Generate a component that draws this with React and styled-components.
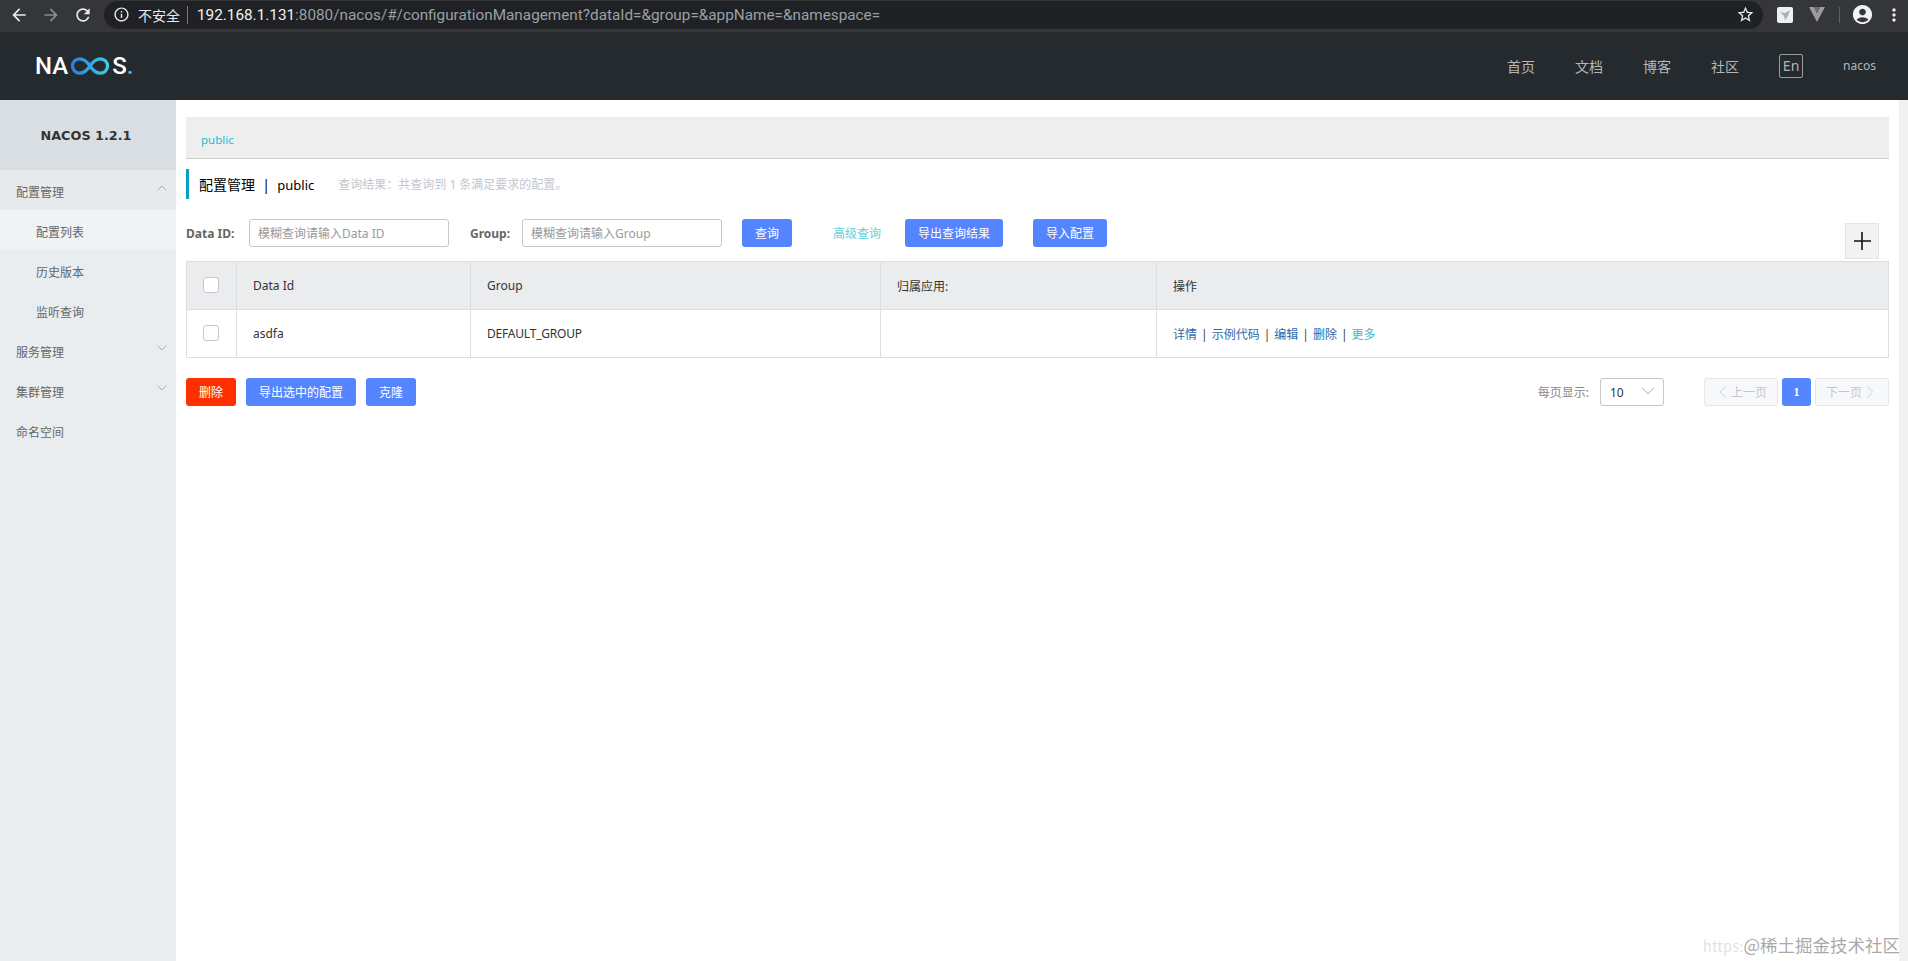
import React from "react";
import styled, { createGlobalStyle } from "styled-components";
import {
  MdArrowBack,
  MdArrowForward,
  MdRefresh,
  MdInfoOutline,
  MdStarBorder,
  MdAccountCircle,
  MdMoreVert,
} from "react-icons/md";
import { ChevronUp, ChevronDown, ChevronLeft, ChevronRight } from "lucide-react";

const FONT = `"Noto Sans", "Noto Sans CJK SC", sans-serif`;

const GlobalStyle = createGlobalStyle`
  html, body {
    margin: 0;
    padding: 0;
    height: 100%;
    overflow: hidden;
    background: #fff;
    font-family: ${FONT};
    font-size: 12px;
    color: #333;
  }
  * { box-sizing: border-box; }
`;

const Page = styled.div`
  position: relative;
  width: 1908px;
  height: 961px;
  display: flex;
  flex-direction: column;
  overflow: hidden;
`;

/* browser chrome */
const BrowserBar = styled.div`
  height: 33px;
  flex: none;
  background: #35363a;
  border-bottom: 1px solid #2a2b2e;
  display: flex;
  align-items: center;
  padding: 0 4px 3px 3px;
`;

const ChromeBtn = styled.span`
  width: 32px;
  height: 24px;
  flex: none;
  display: flex;
  align-items: center;
  justify-content: center;
  font-size: 20px;
  color: ${(p) => (p.$dim ? "#8b8c8e" : "#e8eaed")};
`;

const UrlPill = styled.div`
  margin-left: 5px;
  width: 1659px;
  height: 28px;
  flex: none;
  border-radius: 14px;
  background: #202124;
  display: flex;
  align-items: center;
  padding: 0 8px 0 9px;
  color: #e8eaed;
  font-family: "Roboto", "Noto Sans CJK SC", sans-serif;
  font-size: 14px;
`;

const InfoIcon = styled(MdInfoOutline)`
  font-size: 17px;
  margin-right: 8px;
`;

const Insecure = styled.span`
  font-size: 14px;
  white-space: nowrap;
`;

const UrlDivider = styled.i`
  width: 1px;
  height: 18px;
  background: #75777a;
  margin: 0 9px 0 7px;
`;

const Url = styled.span`
  flex: 1;
  font-size: 15.3px;
  color: #9aa0a6;
  white-space: nowrap;
`;

const UrlHost = styled.span`
  color: #f1f3f4;
`;

const StarIcon = styled(MdStarBorder)`
  font-size: 19px;
`;

const ExtGroup = styled.div`
  flex: 1;
  display: flex;
  align-items: center;
  padding-left: 14px;
`;

const ExtTile = styled.svg`
  width: 16px;
  height: 16px;
  flex: none;
`;

const ExtV = styled.svg`
  width: 16px;
  height: 15px;
  margin-left: 16px;
  flex: none;
`;

const ExtDivider = styled.i`
  width: 1px;
  height: 16px;
  background: #5f6063;
  margin: 0 11px 0 14px;
`;

const Avatar = styled(MdAccountCircle)`
  font-size: 23px;
  color: #f1f3f4;
  flex: none;
`;

const MoreIcon = styled(MdMoreVert)`
  font-size: 20px;
  color: #e8eaed;
  margin-left: 10px;
  flex: none;
`;

/* site header */
const Header = styled.header`
  height: 67px;
  flex: none;
  background: #252a2f;
  display: flex;
  align-items: center;
  justify-content: space-between;
  padding: 0 32px 2px 35px;
`;

const Logo = styled.div`
  display: flex;
  align-items: center;
  color: #fff;
  font-family: "Roboto", "Liberation Sans", sans-serif;
  font-weight: 500;
  font-size: 24px;
  line-height: 1;
`;

const LogoMark = styled.svg`
  width: 42px;
  height: 18px;
  margin: 0 1px;
`;

const LogoDot = styled.span`
  color: #37c8e0;
`;

const HeaderNav = styled.nav`
  display: flex;
  align-items: center;
  gap: 40px;
  color: #b4b6b8;
  font-size: 14px;
`;

const LangBox = styled.span`
  width: 24px;
  height: 24px;
  border: 1px solid #9a9c9e;
  border-radius: 2px;
  display: flex;
  align-items: center;
  justify-content: center;
  color: #b4b6b8;
`;

const UserName = styled.span`
  font-size: 12px;
`;

/* body */
const Body = styled.div`
  flex: 1;
  display: flex;
  min-height: 0;
`;

const Sidebar = styled.aside`
  width: 176px;
  flex: none;
  background: #e9edf0;
`;

const SideTitle = styled.div`
  height: 70px;
  background: #d9dee2;
  display: flex;
  align-items: center;
  justify-content: center;
  padding-right: 4px;
  font-family: "DejaVu Sans", sans-serif;
  font-weight: 700;
  font-size: 12.800px;
  color: #333;
`;

const SideItem = styled.div`
  height: 40px;
  display: flex;
  align-items: center;
  justify-content: space-between;
  padding: 3px 6px 0 ${(p) => (p.$sub ? "36px" : "16px")};
  color: #666;
  font-size: 12px;
  background: ${(p) => (p.$active ? "#f0f3f5" : p.$open ? "#e6eaed" : "transparent")};
  svg {
    color: #888;
    margin-top: -7px;
  }
`;

const Main = styled.main`
  flex: 1;
  min-width: 0;
  position: relative;
  padding: 17px 10px 0 10px;
`;

const ScrollTrack = styled.div`
  width: 9px;
  flex: none;
  background: #f1f1f1;
`;

const Crumb = styled.div`
  height: 42px;
  background: #eeeeee;
  border-bottom: 1px solid #ccc;
  padding: 4px 0 0 15px;
  display: flex;
  align-items: center;
  color: #25bcd0;
  font-size: 11.500px;
`;

const TitleRow = styled.div`
  height: 30px;
  margin-top: 10px;
  display: flex;
  align-items: center;
  border-left: 3px solid #09a0c4;
  padding-left: 10px;
`;

const TitleText = styled.span`
  font-size: 14px;
  color: #000;
  white-space: pre;
`;

const TitleLatin = styled.span`
  font-size: 13px;
`;

const TitleNote = styled.span`
  margin-left: 24px;
  font-size: 12px;
  color: #c4c6cf;
`;

const SearchRow = styled.div`
  height: 28px;
  margin-top: 20px;
  display: flex;
  align-items: center;
`;

const FieldLabel = styled.label`
  font-weight: 700;
  font-size: 12px;
  color: #666;
  width: ${(p) => p.$w}px;
  flex: none;
`;

const Input = styled.input`
  width: 200px;
  height: 28px;
  flex: none;
  border: 1px solid #c4c6cf;
  border-radius: 3px;
  padding: 0 8px;
  margin-right: ${(p) => p.$gap || 0}px;
  font-family: ${FONT};
  font-size: 12px;
  outline: none;
  &::placeholder {
    color: #999;
    opacity: 1;
  }
`;

const Button = styled.button`
  height: 28px;
  flex: none;
  width: ${(p) => p.$w}px;
  margin-left: ${(p) => p.$ml || 0}px;
  border: 0;
  border-radius: 3px;
  padding: 0;
  background: ${(p) => (p.$danger ? "#ff3000" : "#5584ff")};
  color: #fff;
  font-family: ${FONT};
  font-size: 12px;
`;

const AdvancedLink = styled.a`
  margin-left: 41px;
  width: 72px;
  flex: none;
  color: #5fcfdc;
  font-size: 12px;
`;

const PlusButton = styled.div`
  position: absolute;
  left: 1669px;
  top: 123px;
  width: 34px;
  height: 36px;
  background: #f2f2f2;
  border: 1px solid #e4e4e4;
  display: flex;
  align-items: center;
  justify-content: center;
  svg {
    display: block;
  }
`;

const Table = styled.table`
  width: 100%;
  margin-top: 14px;
  border-collapse: collapse;
  table-layout: fixed;
  font-size: 12px;
  color: #333;
`;

const Th = styled.th`
  height: 48px;
  background: #ebecee;
  border: 1px solid #dcdee3;
  padding: 0 16px;
  text-align: left;
  font-weight: 400;
  width: ${(p) => (p.$w ? `${p.$w}px` : "auto")};
`;

const Td = styled.td`
  height: 48px;
  border: 1px solid #dcdee3;
  padding: 0 16px;
`;

const CellLatin = styled.span`
  letter-spacing: -0.2px;
`;

const CheckBox = styled.span`
  display: block;
  width: 16px;
  height: 16px;
  border: 1px solid #c4c6cf;
  border-radius: 3px;
  background: #fff;
  margin-top: -2px;
`;

const OpLink = styled.a`
  color: ${(p) => (p.$more ? "#3eb6c8" : "#2a6aa8")};
`;

const OpSep = styled.span`
  color: #444;
  margin: 0 4px;
`;

const BottomRow = styled.div`
  margin-top: 20px;
  height: 28px;
  display: flex;
  align-items: center;
`;

const Pager = styled.div`
  margin-left: auto;
  display: flex;
  align-items: center;
`;

const PagerLabel = styled.span`
  color: #888;
  font-size: 12px;
  margin-right: 11px;
`;

const PageSize = styled.div`
  width: 64px;
  height: 28px;
  border: 1px solid #c4c6cf;
  border-radius: 3px;
  display: flex;
  align-items: center;
  justify-content: space-between;
  padding: 0 4px 0 9px;
  margin-right: 40px;
  color: #333;
  font-size: 12px;
  svg {
    color: #888;
    margin-top: -3px;
  }
`;

const PageBtn = styled.div`
  width: ${(p) => p.$w}px;
  height: 28px;
  margin-left: ${(p) => p.$ml || 0}px;
  border: ${(p) => (p.$current ? "0" : "1px solid #e6e7eb")};
  border-radius: 3px;
  background: ${(p) => (p.$current ? "#5584ff" : "#f7f8fa")};
  color: ${(p) => (p.$current ? "#fff" : "#c4c6cf")};
  font-family: ${(p) => (p.$current ? `"Liberation Serif", serif` : FONT)};
  font-weight: ${(p) => (p.$current ? 700 : 400)};
  font-size: 12px;
  display: flex;
  align-items: center;
  justify-content: center;
  gap: 0;
  svg {
    margin: 0 -3px;
  }
`;

const Watermark = styled.div`
  position: absolute;
  right: 8px;
  bottom: 2px;
  font-family: "Noto Sans CJK SC", sans-serif;
  font-size: 17.500px;
  line-height: 26px;
  color: rgba(130, 130, 130, 0.7);
  white-space: nowrap;
`;

const WatermarkUrl = styled.span`
  font-size: 15px;
  color: rgba(190, 190, 190, 0.45);
`;

const menu = [
  { label: "配置管理", open: true, arrow: "up" },
  { label: "配置列表", sub: true, active: true },
  { label: "历史版本", sub: true },
  { label: "监听查询", sub: true },
  { label: "服务管理", arrow: "down" },
  { label: "集群管理", arrow: "down" },
  { label: "命名空间" },
];

const ops = ["详情", "示例代码", "编辑", "删除"];

const App = () => {
  return (
    <Page>
      <GlobalStyle />
      <BrowserBar>
        <ChromeBtn><MdArrowBack /></ChromeBtn>
        <ChromeBtn $dim><MdArrowForward /></ChromeBtn>
        <ChromeBtn><MdRefresh /></ChromeBtn>
        <UrlPill>
          <InfoIcon />
          <Insecure>不安全</Insecure>
          <UrlDivider />
          <Url>
            <UrlHost>192.168.1.131</UrlHost>:8080/nacos/#/configurationManagement?dataId=&amp;group=&amp;appName=&amp;namespace=
          </Url>
          <StarIcon />
        </UrlPill>
        <ExtGroup>
          <ExtTile viewBox="0 0 16 16">
            <rect width="16" height="16" rx="2" fill="#eef0f0" />
            <path d="M3 5l5 1 5-3-2 6-3 4-1-4z" fill="#a9b4b0" />
          </ExtTile>
          <ExtV viewBox="0 0 16 15">
            <path d="M0 0h5l3 6 3-6h5L8 15z" fill="#9b9c9e" />
            <path d="M5 0h6L8 6z" fill="#6d6e70" />
          </ExtV>
          <ExtDivider />
          <Avatar />
          <MoreIcon />
        </ExtGroup>
      </BrowserBar>

      <Header>
        <Logo>
          NA
          <LogoMark viewBox="0 0 44 20">
            <defs>
              <linearGradient id="nacosInf" x1="0" x2="1" y1="0" y2="0">
                <stop offset="0" stopColor="#2f7fe0" />
                <stop offset="1" stopColor="#37d0e0" />
              </linearGradient>
            </defs>
            <path
              d="M22 10C18 4 15 2 10.500 2a8 8 0 0 0 0 16C15 18 18 16 22 10s7-8 11.500-8a8 8 0 0 1 0 16C29 18 26 16 22 10z"
              fill="none"
              stroke="url(#nacosInf)"
              strokeWidth="3.600"
            />
          </LogoMark>
          S<LogoDot>.</LogoDot>
        </Logo>
        <HeaderNav>
          <span>首页</span>
          <span>文档</span>
          <span>博客</span>
          <span>社区</span>
          <LangBox>En</LangBox>
          <UserName>nacos</UserName>
        </HeaderNav>
      </Header>

      <Body>
        <Sidebar>
          <SideTitle>NACOS 1.2.1</SideTitle>
          {menu.map((item) => (
            <SideItem key={item.label} $sub={item.sub} $active={item.active} $open={item.open}>
              {item.label}
              {item.arrow === "up" && <ChevronUp size={16} strokeWidth={1} />}
              {item.arrow === "down" && <ChevronDown size={16} strokeWidth={1} />}
            </SideItem>
          ))}
        </Sidebar>

        <Main>
          <Crumb>public</Crumb>
          <TitleRow>
            <TitleText>配置管理  |  <TitleLatin>public</TitleLatin></TitleText>
            <TitleNote>查询结果：共查询到 1 条满足要求的配置。</TitleNote>
          </TitleRow>
          <SearchRow>
            <FieldLabel $w={63}>Data ID:</FieldLabel>
            <Input placeholder="模糊查询请输入Data ID" $gap={21} />
            <FieldLabel $w={52}>Group:</FieldLabel>
            <Input placeholder="模糊查询请输入Group" />
            <Button $w={50} $ml={20}>查询</Button>
            <AdvancedLink>高级查询</AdvancedLink>
            <Button $w={98}>导出查询结果</Button>
            <Button $w={74} $ml={30}>导入配置</Button>
          </SearchRow>
          <PlusButton>
            <svg width="22" height="22" viewBox="0 0 22 22">
              <path d="M3 11h17M11 2v18" stroke="#111" strokeWidth="1.600" />
            </svg>
          </PlusButton>
          <Table>
            <thead>
              <tr>
                <Th $w={50}><CheckBox /></Th>
                <Th $w={234}>Data Id</Th>
                <Th $w={410}>Group</Th>
                <Th $w={276}>归属应用:</Th>
                <Th>操作</Th>
              </tr>
            </thead>
            <tbody>
              <tr>
                <Td><CheckBox /></Td>
                <Td>asdfa</Td>
                <Td><CellLatin>DEFAULT_GROUP</CellLatin></Td>
                <Td />
                <Td>
                  {ops.map((op) => (
                    <React.Fragment key={op}>
                      <OpLink>{op}</OpLink>
                      <OpSep>|</OpSep>
                    </React.Fragment>
                  ))}
                  <OpLink $more>更多</OpLink>
                </Td>
              </tr>
            </tbody>
          </Table>
          <BottomRow>
            <Button $w={50} $danger>删除</Button>
            <Button $w={110} $ml={10}>导出选中的配置</Button>
            <Button $w={50} $ml={10}>克隆</Button>
            <Pager>
              <PagerLabel>每页显示:</PagerLabel>
              <PageSize>
                10
                <ChevronDown size={22} strokeWidth={0.8} />
              </PageSize>
              <PageBtn $w={74}><ChevronLeft size={22} strokeWidth={0.9} />上一页</PageBtn>
              <PageBtn $w={29} $ml={4} $current>1</PageBtn>
              <PageBtn $w={74} $ml={4}>下一页<ChevronRight size={22} strokeWidth={0.9} /></PageBtn>
            </Pager>
          </BottomRow>
        </Main>
        <ScrollTrack />
      </Body>
      <Watermark>
        <WatermarkUrl>https:</WatermarkUrl>@稀土掘金技术社区
      </Watermark>
    </Page>
  );
};

export default App;
